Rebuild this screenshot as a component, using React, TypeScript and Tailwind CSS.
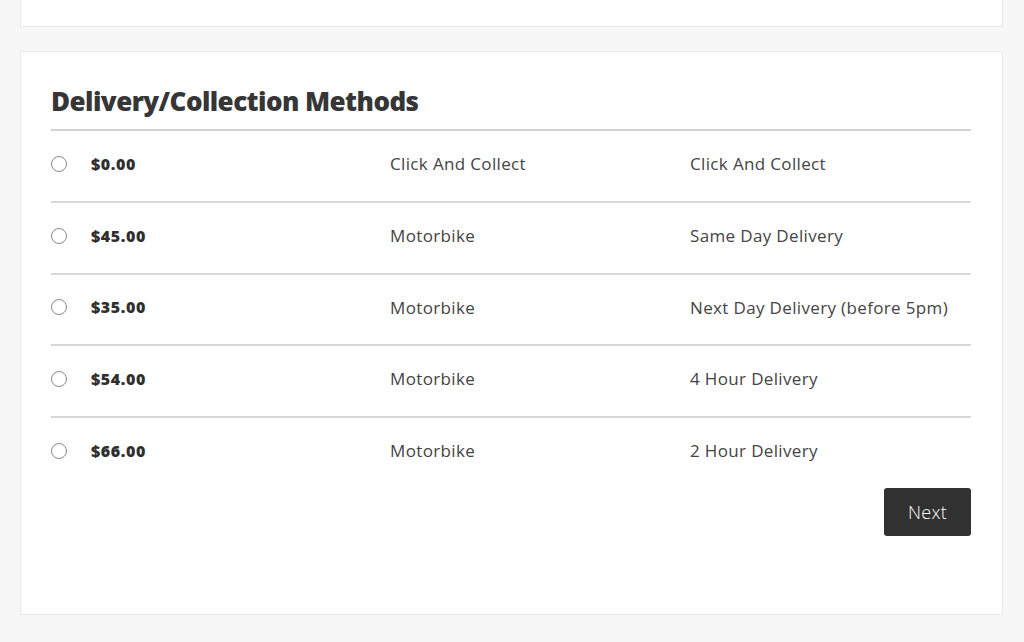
import React from "react";

type Method = { price: string; carrier: string; service: string };

const METHODS: Method[] = [
  { price: "$0.00", carrier: "Click And Collect", service: "Click And Collect" },
  { price: "$45.00", carrier: "Motorbike", service: "Same Day Delivery" },
  { price: "$35.00", carrier: "Motorbike", service: "Next Day Delivery (before 5pm)" },
  { price: "$54.00", carrier: "Motorbike", service: "4 Hour Delivery" },
  { price: "$66.00", carrier: "Motorbike", service: "2 Hour Delivery" },
];

export default function App() {
  const [picked, setPicked] = React.useState<number | null>(null);

  return (
    <div
      className="min-h-[642px] w-[1024px] bg-[#f7f7f7] pl-5 text-[#3a3a3a]"
      style={{ fontFamily: '"Open Sans", "Liberation Sans", sans-serif' }}
    >
      {/* tail of the previous card, top is scrolled away */}
      <div className="h-[27px] w-[983px] border-x border-b border-[#e8e8e8] bg-white" />

      <section className="mt-6 w-[983px] border border-[#e8e8e8] bg-white pt-[33px] pr-[31px] pb-[78px] pl-[30px]">
        <h2 className="text-[26px] font-extrabold leading-[32px] tracking-[-0.55px] text-[#363636]">
          Delivery/Collection Methods
        </h2>

        <div className="mt-[12px] border-t-2 border-[#d2d2d2]">
          {METHODS.map((m, i) => {
            const last = i === METHODS.length - 1;
            return (
              <label
                key={m.price}
                className={
                  "grid cursor-pointer grid-cols-[40px_299px_300px_1fr] items-center pb-[4px] text-[17px] tracking-[0.35px] " +
                  (last ? "h-[70px]" : "h-[71.75px] border-b-2 border-[#d8d8d8]")
                }
              >
                <span className="flex items-center">
                  <input
                    type="radio"
                    name="method"
                    checked={picked === i}
                    onChange={() => setPicked(i)}
                    className="h-4 w-4 appearance-none rounded-full border border-[#8a8a8a] bg-white checked:border-[5px] checked:border-[#333]"
                  />
                </span>
                <span className="text-[16px] font-extrabold tracking-[0.6px] text-[#2f2f2f]">{m.price}</span>
                <span className="text-[#444]">{m.carrier}</span>
                <span className="text-[#444]">{m.service}</span>
              </label>
            );
          })}
        </div>

        <div className="flex justify-end">
          <button className="h-12 w-[87px] rounded-[3px] bg-[#313131] text-[18px] font-light tracking-[0.3px] text-white">
            Next
          </button>
        </div>
      </section>
    </div>
  );
}
